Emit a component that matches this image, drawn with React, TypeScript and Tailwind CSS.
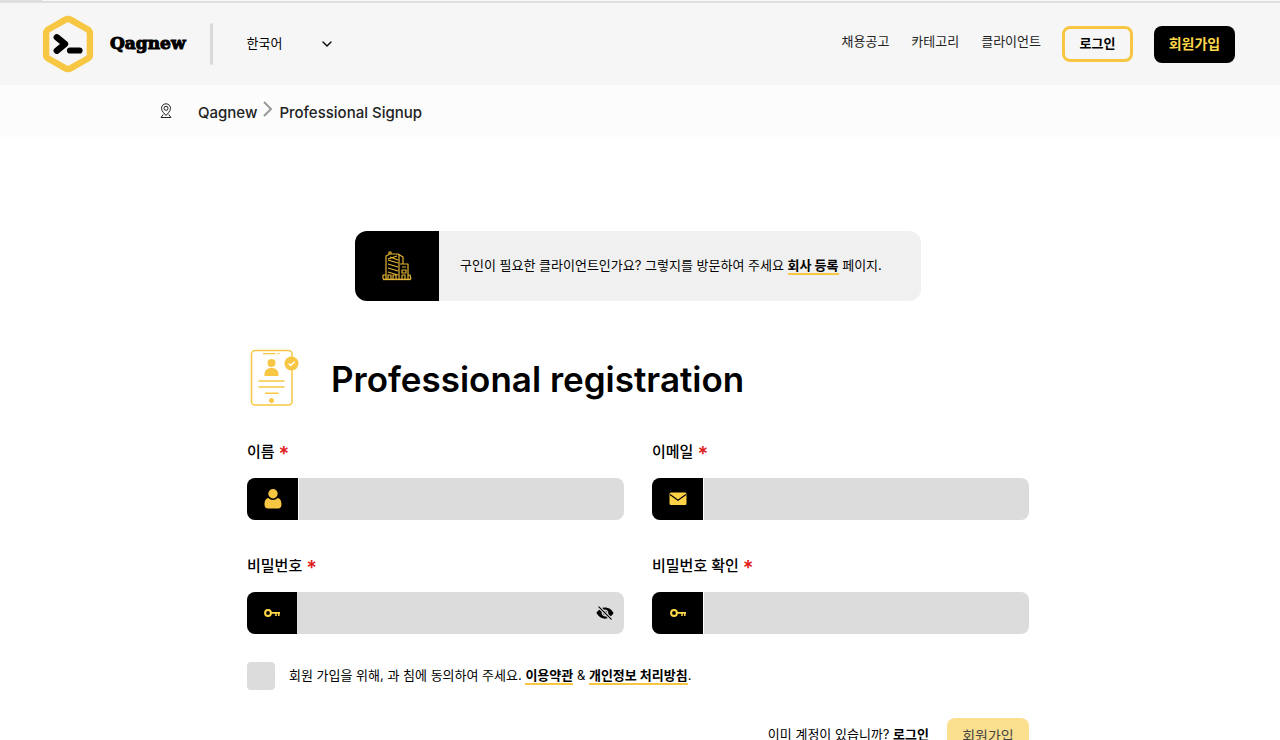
import { ReactNode } from "react";
import { FiChevronDown } from "react-icons/fi";
import { IoEyeOff } from "react-icons/io5";

function Logo() {
  return (
    <svg width="52" height="58" viewBox="0 0 52 58" fill="none" aria-hidden="true">
      <path
        d="M23.5 4.6q2.5-1.4 5 0l16.9 9.6q2.5 1.4 2.5 4.3v21q0 2.9-2.5 4.3l-16.900 9.600q-2.500 1.400-5 0L6.600 43.800q-2.500-1.400-2.500-4.300v-21q0-2.900 2.500-4.300z"
        stroke="#f7c744"
        strokeWidth="6.400"
        strokeLinejoin="round"
      />
      <path
        d="M14.800 22.300 23 29l-8.200 6.700"
        stroke="#000"
        strokeWidth="6.400"
        strokeLinecap="round"
        strokeLinejoin="round"
      />
      <path d="M28 35.500h9.500" stroke="#000" strokeWidth="6.200" strokeLinecap="round" />
    </svg>
  );
}

function PinIcon() {
  return (
    <svg width="12" height="16" viewBox="0 0 12 16" fill="none" stroke="#222" aria-hidden="true">
      <path d="M6 12.500C4.500 10.500 1.500 8.300 1.500 5.300a4.500 4.500 0 0 1 9 0c0 3-3 5.200-4.500 7.200z" />
      <circle cx="6" cy="5.300" r="2" />
      <path d="M3.300 11.500 1 14.500h10l-2.300-3" />
    </svg>
  );
}

function BuildingIcon() {
  return (
    <svg
      width="30"
      height="30"
      viewBox="0 0 30 30"
      fill="none"
      stroke="#e3b436"
      strokeWidth="1.200"
      strokeLinejoin="round"
      aria-hidden="true"
    >
      <path d="M4 28V5l4-2h8l5 3v7" />
      <path d="M7 3V1h2v2M17 3v25" />
      <path d="M6 8l9-3M6 9l10 3M6 13l10 3M6 17l10 3M6 21l10 3M8 6l8 3" />
      <path d="M18 13h8v15M20 16h4M20 19h4v3h-4zM20 28v-4h3v4" />
      <path d="M1 28v-4h3M6 28v-4h3v4M11 28v-4h3v4M26 24h2l1 4" />
      <path d="M1 28.400h28" strokeWidth="1.500" />
    </svg>
  );
}

function RegistrationIcon() {
  return (
    <svg width="50" height="58" viewBox="0 0 50 58" fill="none" stroke="#f7c744" aria-hidden="true">
      <rect x="1.500" y="1.500" width="40.500" height="54.500" rx="3.500" strokeWidth="1.500" />
      <path d="M13 4.700h12.500M27.500 4.700h2" strokeWidth="1.300" />
      <circle cx="21.500" cy="14" r="4" fill="#f7c744" stroke="none" />
      <path d="M14.500 27v-2a6 6 0 0 1 6-6h2a6 6 0 0 1 6 6v2z" fill="#f7c744" stroke="none" />
      <path d="M8.500 32h26M8.500 38h26M15 44.300h13.500" strokeWidth="1.500" />
      <circle cx="21.500" cy="51.500" r="2.500" fill="#f7c744" stroke="none" />
      <circle cx="41.500" cy="14.500" r="7" fill="#f7c744" stroke="none" />
      <path d="m38.700 14.500 2 2 4-3.800" stroke="#fff" strokeWidth="1.500" />
    </svg>
  );
}

function UserIcon() {
  return (
    <svg width="18" height="20" viewBox="0 0 18 20" fill="#f7c744" aria-hidden="true">
      <circle cx="9" cy="4.700" r="4.700" />
      <path d="M4.300 9A6.600 6.600 0 0 0 13.700 9C16.500 9.400 17.500 12.500 17.500 15.500c0 2.600-1.300 4-3.600 4H4.100c-2.300 0-3.600-1.400-3.600-4 0-3 1-6.100 3.800-6.500z" />
    </svg>
  );
}

function MailIcon() {
  return (
    <svg width="18" height="14" viewBox="0 0 18 14" fill="none" aria-hidden="true">
      <rect x="0.500" y="0.500" width="17" height="12.500" rx="1.500" fill="#ffd147" />
      <path d="M1 2.500 9 8.200l8-5.700" stroke="#000" strokeWidth="1.200" />
    </svg>
  );
}

function KeyIcon() {
  return (
    <svg width="16" height="10" viewBox="0 0 16 10" fill="none" stroke="#ffd84a" aria-hidden="true">
      <circle cx="4" cy="5" r="2.900" strokeWidth="2" />
      <path d="M7 4.800h9" strokeWidth="1.800" />
      <path d="M12 5v3M14.800 5v3" strokeWidth="1.500" />
    </svg>
  );
}

interface FieldProps {
  id: string;
  label: string;
  type: string;
  icon: ReactNode;
  toggle?: boolean;
}

function Field({ id, label, type, icon, toggle }: FieldProps) {
  return (
    <div className="flex flex-col gap-3.5">
      <label htmlFor={id} className="flex h-6 items-center gap-1 text-[15px] font-medium">
        {label}
        <span className="pt-1 text-xl leading-5 font-semibold text-[#e01b1b]">*</span>
      </label>
      <div className="flex h-[42px] overflow-hidden rounded-lg bg-[#dcdcdc]">
        <span
          className={
            toggle
              ? "flex w-[50px] shrink-0 items-center justify-center bg-black"
              : "flex w-[52px] shrink-0 items-center justify-center border-r border-white bg-black"
          }
        >
          {icon}
        </span>
        <input id={id} type={type} className="min-w-0 flex-1 bg-transparent px-3 text-sm outline-none" />
        {toggle && (
          <button type="button" aria-label="비밀번호 표시" className="px-2.5">
            <IoEyeOff size={18} />
          </button>
        )}
      </div>
    </div>
  );
}

const NAV = ["채용공고", "카테고리", "클라이언트"];

export default function App() {
  return (
    <div className="min-h-screen bg-white font-['Inter','Noto_Sans_CJK_KR',sans-serif] text-black">
      <div className="flex h-[3px] border-b-2 border-[#dddee0] bg-[#f7f8fa]">
        <span className="w-[42px] bg-[#dddee0]" />
      </div>

      <header className="flex h-[82px] items-center bg-[#f6f6f6] pr-[45px] pl-[42px]">
        <a href="#" className="flex items-center gap-4">
          <Logo />
          <span className="font-['DejaVu_Serif',serif] text-[17px] font-black [-webkit-text-stroke:1px_black]">
            Qagnew
          </span>
        </a>
        <span className="ml-6 h-[42px] w-[3px] rounded-full bg-[#d9d9d9]" />
        <div className="ml-[34px] flex items-center">
          <select
            aria-label="언어"
            className="w-[72px] appearance-none bg-transparent text-[13px] outline-none"
            defaultValue="ko"
          >
            <option value="ko">한국어</option>
            <option value="en">English</option>
          </select>
          <FiChevronDown size={16} />
        </div>

        <nav className="ml-auto flex items-center gap-[22px] pb-1 text-[13px] text-[#222]">
          {NAV.map((item) => (
            <a key={item} href="#">
              {item}
            </a>
          ))}
        </nav>
        <button
          type="button"
          className="ml-[21px] h-9 w-[71px] rounded-lg border-3 border-[#f7c744] text-[13px] font-bold"
        >
          로그인
        </button>
        <button type="button" className="ml-[21px] h-[37px] w-[81px] rounded-lg bg-black text-sm font-bold text-[#ffd84a]">
          회원가입
        </button>
      </header>

      <div className="bg-[#fcfcfc]">
        <nav className="mx-auto flex h-[52px] max-w-[960px] items-center text-[15px] font-medium text-[#222]">
          <PinIcon />
          <a href="#" className="ml-[26px] pt-1">
            Qagnew
          </a>
          <svg width="10" height="16" viewBox="0 0 10 16" fill="none" className="mx-1.5 mb-1" aria-hidden="true">
            <path d="m1 1 7 7-7 7" stroke="#999" strokeWidth="2" />
          </svg>
          <span className="pt-1">Professional Signup</span>
        </nav>
      </div>

      <main className="pt-[94px] pr-1 pb-12">
        <section className="mx-auto flex h-[70px] max-w-[566px] overflow-hidden rounded-xl bg-[#f0f0f0]">
          <div className="flex w-[84px] shrink-0 items-center justify-center bg-black">
            <BuildingIcon />
          </div>
          <p className="flex-1 self-center pl-[21px] text-[13px]">
            구인이 필요한 클라이언트인가요? 그렇지를 방문하여 주세요{" "}
            <a href="#" className="border-b-2 border-[#f7c744] font-bold">
              회사 등록
            </a>{" "}
            페이지.
          </p>
        </section>

        <form className="mx-auto mt-12 max-w-[782px]">
          <div className="flex items-center gap-[31px] pl-[3px]">
            <RegistrationIcon />
            <h1 className="pt-0.5 text-[35px] leading-10 font-semibold">Professional registration</h1>
          </div>

          <div className="mt-[33px] grid grid-cols-2 gap-x-7 gap-y-[34px]">
            <Field id="name" label="이름" type="text" icon={<UserIcon />} />
            <Field id="email" label="이메일" type="email" icon={<MailIcon />} />
            <Field id="password" label="비밀번호" type="password" icon={<KeyIcon />} toggle />
            <Field id="confirm" label="비밀번호 확인" type="password" icon={<KeyIcon />} />
          </div>

          <div className="mt-7 flex items-center gap-3.5">
            <input
              id="agree"
              type="checkbox"
              className="size-7 shrink-0 appearance-none rounded-sm bg-[#dcdcdc] checked:bg-[#f7c744]"
            />
            <label htmlFor="agree" className="text-[13px]">
              회원 가입을 위해, 과 침에 동의하여 주세요.{" "}
              <a href="#" className="border-b-2 border-[#f7c744] font-bold">
                이용약관
              </a>{" "}
              &amp;{" "}
              <a href="#" className="border-b-2 border-[#f7c744] font-bold">
                개인정보 처리방침
              </a>
              .
            </label>
          </div>

          <div className="mt-7 flex items-start justify-end gap-[18px]">
            <p className="pt-[7px] text-[13px]">
              이미 계정이 있습니까?{" "}
              <a href="#" className="font-bold">
                로그인
              </a>
            </p>
            <button type="submit" className="h-9 w-[82px] rounded-lg bg-[#fadf8f] text-sm text-[#444]">
              회원가입
            </button>
          </div>
        </form>
      </main>
    </div>
  );
}
